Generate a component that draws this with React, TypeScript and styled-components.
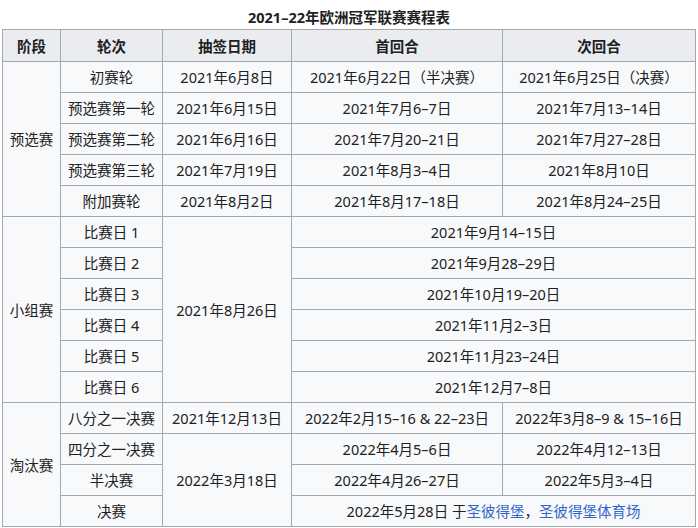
import React from "react";
import styled, { createGlobalStyle } from "styled-components";

const Global = createGlobalStyle`
  html, body { margin: 0; padding: 0; background: #fff; }
  body { font-family: "Noto Sans", "Noto Sans CJK SC", sans-serif; color: #202122; }
`;

const Page = styled.div`
  padding: 0 3px 0 2px;
`;

const Table = styled.table`
  width: 693px;
  border-collapse: collapse;
  table-layout: fixed;
  font-size: 14.5px;
  background: #f8f9fa;
  border: 1px solid #a2a9b1;
`;

const Caption = styled.caption`
  font-weight: bold;
  font-size: 14.5px;
  line-height: 22px;
  padding: 6px 0 1px;
  background: #fff;
`;

const Th = styled.th`
  background: #eaecf0;
  border: 1px solid #a2a9b1;
  padding: 5px 4px 4px;
  line-height: 22px;
  font-weight: bold;
  text-align: center;
  white-space: nowrap;
`;

const Td = styled.td`
  border: 1px solid #a2a9b1;
  padding: 4px 4px;
  line-height: 22px;
  text-align: center;
  white-space: nowrap;
`;

const Link = styled.a`
  color: #3366cc;
  text-decoration: none;
`;

type Row = string[];

const qualifying: Row[] = [
  ["初赛轮", "2021年6月8日", "2021年6月22日（半决赛）", "2021年6月25日（决赛）"],
  ["预选赛第一轮", "2021年6月15日", "2021年7月6–7日", "2021年7月13–14日"],
  ["预选赛第二轮", "2021年6月16日", "2021年7月20–21日", "2021年7月27–28日"],
  ["预选赛第三轮", "2021年7月19日", "2021年8月3–4日", "2021年8月10日"],
  ["附加赛轮", "2021年8月2日", "2021年8月17–18日", "2021年8月24–25日"],
];

const group: Row[] = [
  ["比赛日 1", "2021年9月14–15日"],
  ["比赛日 2", "2021年9月28–29日"],
  ["比赛日 3", "2021年10月19–20日"],
  ["比赛日 4", "2021年11月2–3日"],
  ["比赛日 5", "2021年11月23–24日"],
  ["比赛日 6", "2021年12月7–8日"],
];

export default function App() {
  return (
    <Page>
      <Global />
      <Table>
        <Caption>2021–22年欧洲冠军联赛赛程表</Caption>
        <colgroup>
          <col style={{ width: 58 }} />
          <col style={{ width: 102 }} />
          <col style={{ width: 129 }} />
          <col style={{ width: 211 }} />
          <col style={{ width: 193 }} />
        </colgroup>
        <thead>
          <tr>
            <Th>阶段</Th>
            <Th>轮次</Th>
            <Th>抽签日期</Th>
            <Th>首回合</Th>
            <Th>次回合</Th>
          </tr>
        </thead>
        <tbody>
          {qualifying.map((r, i) => (
            <tr key={r[0]}>
              {i === 0 && <Td rowSpan={5}>预选赛</Td>}
              <Td>{r[0]}</Td>
              <Td>{r[1]}</Td>
              <Td>{r[2]}</Td>
              <Td>{r[3]}</Td>
            </tr>
          ))}
          {group.map((r, i) => (
            <tr key={r[0]}>
              {i === 0 && <Td rowSpan={6}>小组赛</Td>}
              <Td>{r[0]}</Td>
              {i === 0 && <Td rowSpan={6}>2021年8月26日</Td>}
              <Td colSpan={2}>{r[1]}</Td>
            </tr>
          ))}
          <tr>
            <Td rowSpan={4}>淘汰赛</Td>
            <Td>八分之一决赛</Td>
            <Td>2021年12月13日</Td>
            <Td>2022年2月15–16 &amp; 22–23日</Td>
            <Td>2022年3月8–9 &amp; 15–16日</Td>
          </tr>
          <tr>
            <Td>四分之一决赛</Td>
            <Td rowSpan={3}>2022年3月18日</Td>
            <Td>2022年4月5–6日</Td>
            <Td>2022年4月12–13日</Td>
          </tr>
          <tr>
            <Td>半决赛</Td>
            <Td>2022年4月26–27日</Td>
            <Td>2022年5月3–4日</Td>
          </tr>
          <tr>
            <Td>决赛</Td>
            <Td colSpan={2}>
              2022年5月28日 于<Link href="#">圣彼得堡</Link>，<Link href="#">圣彼得堡体育场</Link>
            </Td>
          </tr>
        </tbody>
      </Table>
    </Page>
  );
}
